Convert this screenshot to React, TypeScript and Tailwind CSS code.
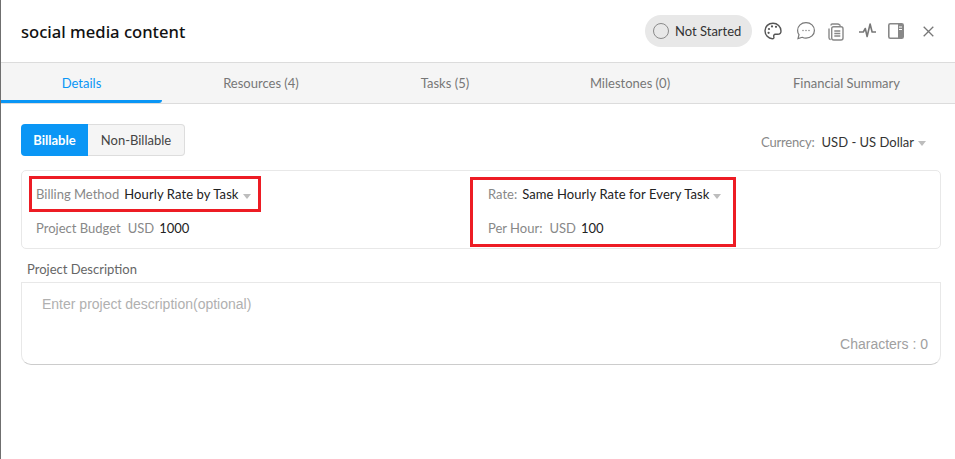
import React from "react";

const Caret = () => <span className="ml-[4px] mt-[2px] inline-block h-0 w-0 border-x-[4.5px] border-t-[5px] border-x-transparent border-t-[#bdbdbd]" />;

const Tab = ({ label, w, active }: { label: string; w: string; active?: boolean }) => (
  <div className={`flex h-full shrink-0 items-center justify-center border-b-[3px] pt-[4px] text-[13px] ${w} ${active ? "rounded-br-[3px] border-[#0a96f5] text-[#0a96f5]" : "border-transparent text-[#777777]"}`}>
    {label}
  </div>
);

export default function App() {
  return (
    <div className="flex h-[459px] w-[955px] overflow-hidden bg-white font-['Lato',sans-serif] text-[13px] text-[#222222]">
      <div className="w-px shrink-0 bg-[#6f6f6f]" />
      <div className="flex min-w-0 flex-1 flex-col">
        <header className="flex h-[62px] shrink-0 items-center pl-[20px] pr-[21px]">
          <h1 className="pt-[2px] font-['Noto_Sans',sans-serif] text-[16.6px] font-medium text-[#111111]">social media content</h1>
          <div className="ml-auto flex items-center">
            <div className="flex h-[32px] w-[107px] items-center gap-[6px] rounded-full bg-[#e8e8e8] pl-[8px] text-[#333333]">
              <span className="h-[16px] w-[16px] rounded-full border-[1.5px] border-[#8a8a8a]" />
              <span className="pt-[2px]">Not Started</span>
            </div>
            <svg className="ml-[11px]" width="20" height="20" viewBox="0 0 20 20" fill="none" stroke="#555" strokeWidth="1.4">
              <path d="M10 2.200c-4.600 0-8 3.300-8 7.500 0 4.300 3.400 8 7.300 8 1.500 0 1.900-1 1.500-2-.5-1.300.2-2.400 1.600-2.400h2.200c2 0 3.400-1.300 3.400-3.300 0-4.300-3.600-7.800-8-7.800Z" />
              <circle cx="6" cy="8" r="1.100" fill="#555" stroke="none" />
              <circle cx="9" cy="5.400" r="1.100" fill="#555" stroke="none" />
              <circle cx="13" cy="5.800" r="1.100" fill="#555" stroke="none" />
              <circle cx="5.600" cy="11.800" r="1.100" fill="#555" stroke="none" />
            </svg>
            <svg className="ml-[13px]" width="20" height="20" viewBox="0 0 20 20" fill="none" stroke="#777" strokeWidth="1.2">
              <path d="M10 1.600c-4.800 0-8.400 3.500-8.400 7.800 0 1.600.5 3 1.400 4.200l-1 4 4.200-1.300c1.200.6 2.400.9 3.800.9 4.800 0 8.400-3.500 8.400-7.800S14.800 1.600 10 1.600Z" />
              <circle cx="7" cy="9.500" r=".7" fill="#777" stroke="none" />
              <circle cx="10" cy="9.500" r=".7" fill="#777" stroke="none" />
              <circle cx="13" cy="9.500" r=".7" fill="#777" stroke="none" />
            </svg>
            <svg className="ml-[10px] mt-[2px]" width="20" height="20" viewBox="0 0 20 20" fill="none" stroke="#888" strokeWidth="1.400">
              <path d="M5 3.500V3.200c0-.7.500-1.200 1.200-1.200h5.300c.9 0 1.700.4 2.300 1l.7.700" />
              <path d="M3 6.500v9.300c0 1 .8 1.700 1.700 1.700" />
              <rect x="5.700" y="4.700" width="11.300" height="13.300" rx="2" />
              <path d="M8.300 9h6M8.300 11.500h6M8.300 14h6" />
            </svg>
            <svg className="ml-[12px]" width="19" height="20" viewBox="0 0 19 20" fill="none" stroke="#777" strokeWidth="1.600" strokeLinejoin="round">
              <path d="M1 11h4.300l2-3.500 1.800 8 3-12.500 2 8H18" />
            </svg>
            <svg className="ml-[10px]" width="18" height="18" viewBox="0 0 18 18">
              <rect x="1.800" y="1.800" width="14.400" height="14.400" rx="1.500" fill="none" stroke="#888" strokeWidth="1.600" />
              <rect x="11" y="2" width="5" height="14" fill="#888" />
              <path d="M12 5h3M12 7.500h3" stroke="#fff" strokeWidth="1" />
            </svg>
            <svg className="ml-[18px]" width="11" height="11" viewBox="0 0 11 11" stroke="#777" strokeWidth="1.300">
              <path d="M.7.700l9.600 9.600M10.300.700.700 10.300" />
            </svg>
          </div>
        </header>

        <nav className="flex h-[42px] shrink-0 overflow-hidden border-y border-[#dcdcdc] bg-[#f5f5f5]">
          <Tab label="Details" w="w-[161px]" active />
          <Tab label="Resources (4)" w="w-[198px]" />
          <Tab label="Tasks (5)" w="w-[170px]" />
          <Tab label="Milestones (0)" w="w-[200px]" />
          <div className="flex flex-1 items-center justify-center pl-[8px] pt-[1px] text-[13px] text-[#777777]">Financial Summary</div>
        </nav>

        <main className="flex flex-col pl-[20px] pr-[14px]">
          <div className="mt-[20px] flex items-center justify-between">
            <div className="flex h-[32px]">
              <button className="w-[67px] rounded-l-[4px] bg-[#0a96f5] pt-[2px] font-bold text-white">Billable</button>
              <button className="w-[97px] rounded-r-[4px] border border-l-0 border-[#dddddd] bg-[#f5f5f5] pt-[2px] text-[#444444]">Non-Billable</button>
            </div>
            <div className="mr-[15px] mt-[5px] flex items-center">
              <span className="tracking-[-0.2px] text-[#888888]">Currency:</span>
              <span className="ml-[7px] text-[#333333]">USD - US Dollar</span>
              <Caret />
            </div>
          </div>

          <section className="mt-[14px] flex h-[79px] rounded-[5px] border border-[#e8e8e8]">
            <div className="w-[448px] shrink-0 pl-[7px] pt-[5px]">
              <div className="flex h-[36px] w-[232px] items-center border-[3px] border-[#ed1c24] pl-[4px] pt-[2px]">
                <span className="text-[#888888]">Billing Method</span>
                <span className="ml-[5px] tracking-[0.1px] text-[#222222]">Hourly Rate by Task</span>
                <Caret />
              </div>
              <div className="ml-[7px] mt-[8px] flex h-[18px] items-center">
                <span className="text-[#888888]">Project Budget</span>
                <span className="ml-[7px] text-[#888888]">USD</span>
                <span className="ml-[5px] text-[#222222]">1000</span>
              </div>
            </div>
            <div className="mt-[6px] h-[70px] w-[266px] shrink-0 border-[3px] border-[#ed1c24] pl-[15px]">
              <div className="mt-[6px] flex h-[18px] items-center">
                <span className="text-[#888888]">Rate:</span>
                <span className="ml-[5px] tracking-[0.09px] text-[#222222]">Same Hourly Rate for Every Task</span>
                <Caret />
              </div>
              <div className="mt-[16px] flex h-[18px] items-center">
                <span className="text-[#888888]">Per Hour:</span>
                <span className="ml-[7px] text-[#888888]">USD</span>
                <span className="ml-[5px] text-[#222222]">100</span>
              </div>
            </div>
          </section>

          <div className="ml-[6px] mt-[11px] h-[22px] text-[#666666]">Project Description</div>
          <section className="flex h-[83px] flex-col rounded-b-[10px] border border-[#e8e8e8] border-b-[#cccccc] px-[20px] font-['Liberation_Sans',sans-serif] text-[14px]">
            <div className="mt-[11px] text-[#b0b0b0]">Enter project description(optional)</div>
            <div className="-mr-[8px] mt-auto mb-[9px] text-right text-[#a0a0a0]">Characters : 0</div>
          </section>
        </main>
      </div>
    </div>
  );
}
